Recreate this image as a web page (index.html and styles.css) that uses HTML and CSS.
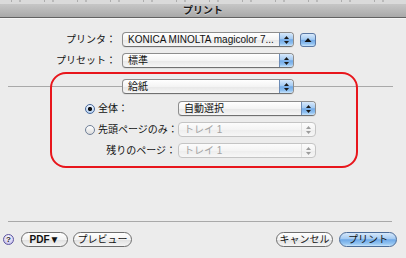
FILE: index.html
```html
<!DOCTYPE html>
<html lang="ja">
<head>
<meta charset="utf-8">
<title>プリント</title>
<link rel="stylesheet" href="styles.css">
</head>
<body>
<div class="window">
  <div class="topstrip"></div>
  <div class="titlebar">プリント</div>
  <div class="main">
    <div class="form">
      <div class="label">プリンタ：</div>
      <div class="popup"><span class="popup-label">KONICA MINOLTA magicolor 7...</span><span class="popup-arrows"><svg width="7" height="10" viewBox="0 0 7 10"><polygon points="1,4 3.5,1 6,4"/><polygon points="1,6 3.5,9 6,6"/></svg></span></div>
      <div class="disclose"><svg width="8" height="6" viewBox="0 0 8 6"><polygon points="0.5,5 4,1 7.5,5"/></svg></div>
      <div class="label">プリセット：</div>
      <div class="popup"><span class="popup-label">標準</span><span class="popup-arrows"><svg width="7" height="10" viewBox="0 0 7 10"><polygon points="1,4 3.5,1 6,4"/><polygon points="1,6 3.5,9 6,6"/></svg></span></div>
    </div>

    <div class="panehead">
      <div class="line left"></div>
      <div class="popup pane"><span class="popup-label">給紙</span><span class="popup-arrows"><svg width="7" height="10" viewBox="0 0 7 10"><polygon points="1,4 3.5,1 6,4"/><polygon points="1,6 3.5,9 6,6"/></svg></span></div>
      <div class="line right"></div>
    </div>

    <div class="source">
      <div class="opt"><span class="radio on"></span><span>全体：</span></div>
      <div class="popup small"><span class="popup-label">自動選択</span><span class="popup-arrows"><svg width="7" height="10" viewBox="0 0 7 10"><polygon points="1,4 3.5,1 6,4"/><polygon points="1,6 3.5,9 6,6"/></svg></span></div>
      <div class="opt"><span class="radio"></span><span>先頭ページのみ：</span></div>
      <div class="popup small disabled"><span class="popup-label">トレイ 1</span><span class="popup-arrows"><svg width="7" height="10" viewBox="0 0 7 10"><polygon points="1,4 3.5,1 6,4"/><polygon points="1,6 3.5,9 6,6"/></svg></span></div>
      <div class="opt right">残りのページ：</div>
      <div class="popup small disabled"><span class="popup-label">トレイ 1</span><span class="popup-arrows"><svg width="7" height="10" viewBox="0 0 7 10"><polygon points="1,4 3.5,1 6,4"/><polygon points="1,6 3.5,9 6,6"/></svg></span></div>
    </div>

    <div class="separator"></div>

    <div class="buttons">
      <div class="help">?</div>
      <div class="btn pdf">PDF▼</div>
      <div class="btn preview">プレビュー</div>
      <div class="spacer"></div>
      <div class="btn cancel">キャンセル</div>
      <div class="btn primary">プリント</div>
    </div>
  </div>
  <div class="highlight"></div>
</div>
</body>
</html>
```
FILE: styles.css
```css
html, body {
  margin: 0;
  padding: 0;
}
body {
  width: 406px;
  height: 258px;
  overflow: hidden;
  background: #ececec;
  font-family: "Liberation Sans", "Noto Sans CJK JP", sans-serif;
  font-size: 10px;
  color: #111;
}
.window {
  position: relative;
  height: 258px;
}
.topstrip {
  height: 4px;
  background:
    repeating-linear-gradient(90deg, transparent 0 11px, rgba(90,90,90,.35) 11px 12px, transparent 12px 19px, rgba(90,90,90,.25) 19px 21px, transparent 21px 33px),
    #dadada;
  background-size: 100% 2px, auto;
  background-repeat: no-repeat;
}
.titlebar {
  height: 13px;
  line-height: 13px;
  text-align: center;
  font-size: 10px;
  font-weight: bold;
  color: #1c1c1c;
  text-shadow: 0 1px 0 rgba(255,255,255,.45);
  background: linear-gradient(#c6c6c6, #b5b5b5 60%, #a9a9a9);
  border-bottom: 1px solid #626262;
  box-shadow: 0 1px 0 #f6f6f6;
}
.main {
  padding-top: 14px;
}
.form {
  display: grid;
  grid-template-columns: 116px 172px 16px;
  grid-auto-rows: 15px;
  column-gap: 6px;
  row-gap: 6px;
  align-items: center;
}
.label {
  text-align: right;
  line-height: 15px;
  white-space: nowrap;
}
.popup {
  display: flex;
  height: 15px;
  box-sizing: border-box;
  border: 1px solid #8d8d8d;
  border-bottom-color: #707070;
  border-radius: 4px;
  background: linear-gradient(#ffffff, #f4f4f4 50%, #e7e7e7 52%, #f6f6f6);
  overflow: hidden;
  box-shadow: 0 1px 0 rgba(0,0,0,.06);
}
.popup-label {
  flex: 1;
  padding-left: 5px;
  line-height: 13px;
  white-space: nowrap;
  overflow: hidden;
}
.popup-arrows {
  width: 13px;
  border-left: 1px solid #6d8cb6;
  background: linear-gradient(#d8e9fb, #a3caf2 45%, #72aae7 52%, #8fc0f0 80%, #c8e4fb);
  display: flex;
  align-items: center;
  justify-content: center;
}
.popup-arrows svg {
  fill: #1a1a1a;
}
.popup.disabled {
  border-color: #c4c4c4;
  background: linear-gradient(#fcfcfc, #f4f4f4 50%, #ededed 52%, #f7f7f7);
  box-shadow: none;
}
.popup.disabled .popup-label {
  color: #a3a3a3;
}
.popup.disabled .popup-arrows {
  background: none;
  border-left: 1px solid #e0e0e0;
}
.popup.disabled .popup-arrows svg {
  fill: #9c9c9c;
}
.disclose {
  width: 16px;
  height: 14px;
  box-sizing: border-box;
  border: 1px solid #5b78a3;
  border-radius: 3px;
  background: linear-gradient(#d8e9fb, #a3caf2 45%, #72aae7 52%, #8fc0f0 80%, #c8e4fb);
  display: flex;
  align-items: center;
  justify-content: center;
}
.disclose svg {
  fill: #111;
}
.panehead {
  display: flex;
  align-items: center;
  margin-top: 11px;
}
.line {
  height: 1px;
  background: #a9a9a9;
}
.line.left {
  margin-left: 8px;
  width: 114px;
}
.line.right {
  width: 99px;
}
.popup.pane {
  width: 172px;
}
.source {
  display: grid;
  grid-template-columns: 93px 138px;
  grid-auto-rows: 15px;
  row-gap: 6px;
  margin-top: 7px;
  margin-left: 85px;
  align-items: center;
}
.opt {
  display: flex;
  align-items: center;
  gap: 3px;
  white-space: nowrap;
  line-height: 15px;
}
.opt.right {
  justify-content: flex-end;
  padding-right: 2px;
}
.radio {
  width: 10px;
  height: 10px;
  box-sizing: border-box;
  border-radius: 50%;
  border: 1px solid #6f7f97;
  background: linear-gradient(#ffffff, #dcdcdc);
  flex: none;
}
.radio.on {
  border-color: #45679c;
  background:
    radial-gradient(circle, #111 0 1.8px, transparent 2.4px),
    linear-gradient(#eef4fd, #b6d0f1);
}
.separator {
  margin: 63px 14px 0 8px;
  height: 1px;
  background: #a9a9a9;
}
.buttons {
  display: flex;
  align-items: center;
  margin-top: 10px;
  height: 15px;
}
.help {
  width: 11px;
  height: 11px;
  box-sizing: border-box;
  margin-left: 3px;
  border-radius: 50%;
  border: 1px solid #5e56a0;
  background: radial-gradient(circle at 50% 30%, #ffffff, #cfcaf0 70%, #b3acdf);
  font-size: 8px;
  font-weight: bold;
  line-height: 9px;
  text-align: center;
  color: #222;
}
.btn {
  height: 15px;
  box-sizing: border-box;
  border: 1px solid #6e6e6e;
  border-radius: 8px;
  background: linear-gradient(#ffffff, #f2f2f2 50%, #e0e0e0 52%, #f5f5f5);
  line-height: 13px;
  text-align: center;
  white-space: nowrap;
  color: #111;
}
.btn.pdf {
  margin-left: 7px;
  width: 47px;
  font-weight: bold;
}
.btn.preview {
  margin-left: 5px;
  width: 59px;
}
.spacer {
  flex: 1;
}
.btn.cancel {
  width: 57px;
}
.btn.primary {
  margin-left: 6px;
  margin-right: 9px;
  width: 58px;
  border-color: #4c6c98;
  background: linear-gradient(#d6e8fb, #a3caf2 45%, #6ea8e7 52%, #97c7f2 85%, #cbe6fb);
}
.highlight {
  position: absolute;
  left: 50px;
  top: 72px;
  width: 308px;
  height: 96px;
  box-sizing: border-box;
  border: 2px solid #e8161c;
  border-radius: 16px;
  pointer-events: none;
}
```
